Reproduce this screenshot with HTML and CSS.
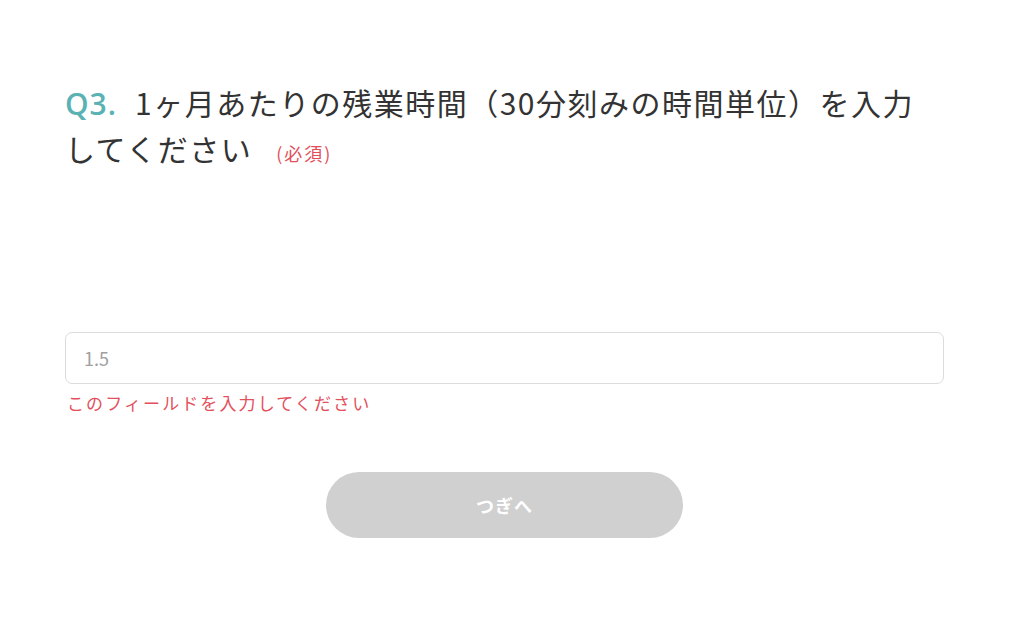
FILE: index.html
```html
<!DOCTYPE html>
<html lang="ja">
<head>
<meta charset="utf-8">
<link rel="stylesheet" href="styles.css">
</head>
<body>
<main class="page">
  <h1 class="question"><span class="qnum">Q3.</span>1ヶ月あたりの残業時間（30分刻みの時間単位）を入力してください<span class="required">(必須)</span></h1>
  <div class="field">
    <input class="input" type="text" placeholder="1.5">
    <p class="error">このフィールドを入力してください</p>
  </div>
  <div class="actions">
    <button class="next" type="button">つぎへ</button>
  </div>
</main>
</body>
</html>
```
FILE: styles.css
```css
* { box-sizing: border-box; }
html, body { margin: 0; padding: 0; background: #fff; }
body {
  font-family: "Noto Sans CJK JP", "Noto Sans", sans-serif;
  color: #333;
}
.page {
  width: 879px;
  margin-left: 65px;
  padding-top: 80px;
}
.question {
  margin: 0;
  font-size: 30px;
  line-height: 44px;
  font-weight: 400;
  letter-spacing: 1.5px;
  color: #333;
  padding-right: 20px;
}
.qnum {
  font-family: "Open Sans", sans-serif;
  font-weight: 600;
  color: #5ab2b4;
  letter-spacing: 1px;
  margin-right: 18px;
}
.required {
  font-size: 18px;
  color: #e2505c;
  letter-spacing: 2px;
  margin-left: 24px;
}
.required-paren { font-family: "Open Sans", sans-serif; }
.field {
  margin-top: 157px;
}
.input {
  display: block;
  width: 100%;
  height: 52px;
  border: 1px solid #dcdcdc;
  border-radius: 7px;
  padding: 0 18px;
  font-family: "Noto Sans CJK JP", sans-serif;
  font-size: 18px;
  color: #333;
  outline: none;
}
.input::placeholder { color: #a0a0a0; }
.error {
  margin: 6px 0 0 2px;
  font-size: 17px;
  line-height: 26px;
  color: #e2505c;
  letter-spacing: 2.1px;
}
.actions {
  display: flex;
  justify-content: center;
  margin-top: 56px;
}
.next {
  width: 357px;
  height: 66px;
  border: none;
  border-radius: 33px;
  background: #d0d0d0;
  color: #fff;
  font-family: "Noto Sans CJK JP", sans-serif;
  font-size: 18px;
  font-weight: 700;
  letter-spacing: 1px;
}
```
